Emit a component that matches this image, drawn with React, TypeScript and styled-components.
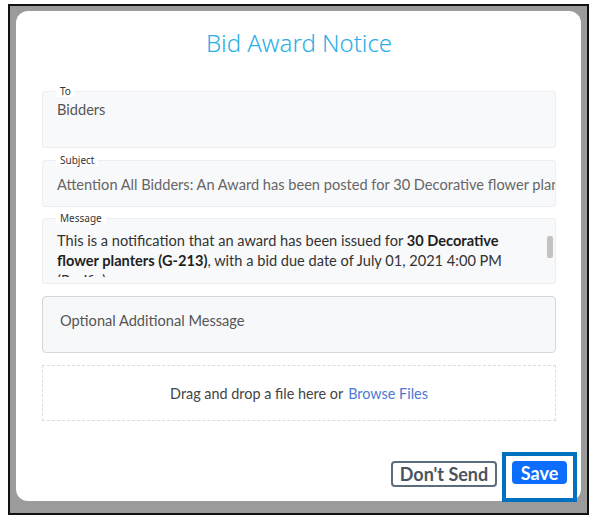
import React from "react";
import styled, { createGlobalStyle } from "styled-components";

const Global = createGlobalStyle`
  html, body { margin: 0; padding: 0; background: #ffffff; }
  body { font-family: Lato, "Noto Sans", sans-serif; }
  * { box-sizing: border-box; }
`;

const Frame = styled.div`
  margin: 4px 0 0 8px;
  width: 581px;
  height: 511px;
  border: 2px solid #111;
  background: #9b9b9b;
  padding: 5px 4px 12px 6px;
  position: relative;
`;

const Modal = styled.div`
  width: 565px;
  height: 490px;
  background: #ffffff;
  border-radius: 12px;
  padding: 16px 25px 0 26px;
  display: flex;
  flex-direction: column;
`;

const Title = styled.h1`
  margin: 0 0 26px;
  font-family: "Noto Sans", sans-serif;
  font-weight: 300;
  font-size: 24px;
  line-height: 32px;
  text-align: center;
  color: #2aaee6;
`;

const Field = styled.fieldset<{ $gap: number; $pb?: number }>`
  margin: 0 0 ${(p) => p.$gap}px;
  padding: 0 0 ${(p) => p.$pb ?? 0}px;
  border: 1px solid #eceef1;
  border-radius: 3px;
  background: #f8f9fa;
  min-width: 0;
  position: relative;
`;

const Legend = styled.legend`
  margin-left: 13px;
  padding: 0 4px;
  font-family: "Noto Sans", sans-serif;
  font-size: 10px;
  line-height: 12px;
  color: #333;
  background: #ffffff;
`;

const FieldBody = styled.div<{ $h: number; $pt: number; $muted?: boolean }>`
  height: ${(p) => p.$h}px;
  padding: ${(p) => p.$pt}px 14px 0 14px;
  font-size: 14.6px;
  line-height: 20px;
  color: ${(p) => (p.$muted ? "#666" : "#555")};
  white-space: nowrap;
  overflow: hidden;
`;

const MessageBody = styled.div`
  height: 53px;
  padding: 7px 30px 0 14px;
  font-size: 14.6px;
  line-height: 20px;
  color: #333;
  overflow: hidden;
  b { color: #1f1f1f; font-weight: 700; }
`;

const Thumb = styled.div`
  position: absolute;
  right: 2px;
  top: 12px;
  width: 6px;
  height: 22px;
  border-radius: 2px;
  background: #c3c3c3;
`;

const Optional = styled.div`
  height: 57px;
  margin-top: 12px;
  border: 1px solid #d3d7db;
  border-radius: 4px;
  background: #f7f8fa;
  padding: 14px 17px 0;
  font-size: 14.6px;
  line-height: 20px;
  color: #555;
`;

const Drop = styled.div`
  height: 56px;
  margin-top: 12px;
  border: 1px dashed #dcdcdc;
  display: flex;
  align-items: center;
  justify-content: center;
  font-size: 14.4px;
  color: #444;
`;

const Link = styled.span`
  color: #4c7ad4;
  margin-left: 5px;
`;

const Footer = styled.div`
  margin-top: 40px;
  margin-right: -11px;
  display: flex;
  justify-content: flex-end;
  align-items: flex-start;
  gap: 15px;
`;

const Button = styled.button<{ $primary?: boolean }>`
  font-family: inherit;
  font-weight: 700;
  font-size: 18px;
  line-height: 1;
  border-radius: 4px;
  cursor: pointer;
  padding: 0;
  height: ${(p) => (p.$primary ? 23 : 26)}px;
  width: ${(p) => (p.$primary ? 55 : 106)}px;
  border: ${(p) => (p.$primary ? "none" : "2px solid #5b6d7d")};
  background: ${(p) => (p.$primary ? "#0d6efd" : "#ffffff")};
  color: ${(p) => (p.$primary ? "#ffffff" : "#4a5560")};
`;

const Highlight = styled.div`
  position: relative;
  &::after {
    content: "";
    position: absolute;
    left: -10px;
    right: -10px;
    top: -9px;
    bottom: -18px;
    border: 4px solid #0070c0;
    pointer-events: none;
  }
`;

export default function App() {
  return (
    <>
      <Global />
      <Frame>
        <Modal>
          <Title>Bid Award Notice</Title>
          <Field $gap={6}>
            <Legend>To</Legend>
            <FieldBody $h={50} $pt={3}>Bidders</FieldBody>
          </Field>
          <Field $gap={5}>
            <Legend>Subject</Legend>
            <FieldBody $h={40} $pt={9} $muted>
              Attention All Bidders: An Award has been posted for 30 Decorative flower planters (G-213)
            </FieldBody>
          </Field>
          <Field $gap={0} $pb={6}>
            <Legend>Message</Legend>
            <MessageBody>
              This is a notification that an award has been issued for <b>30 Decorative flower planters (G-213)</b>, with a bid due date of July 01, 2021 4:00 PM (Pacific).
            </MessageBody>
            <Thumb />
          </Field>
          <Optional>Optional Additional Message</Optional>
          <Drop>
            Drag and drop a file here or<Link>Browse Files</Link>
          </Drop>
          <Footer>
            <Button>Don't Send</Button>
            <Highlight>
              <Button $primary>Save</Button>
            </Highlight>
          </Footer>
        </Modal>
      </Frame>
    </>
  );
}
